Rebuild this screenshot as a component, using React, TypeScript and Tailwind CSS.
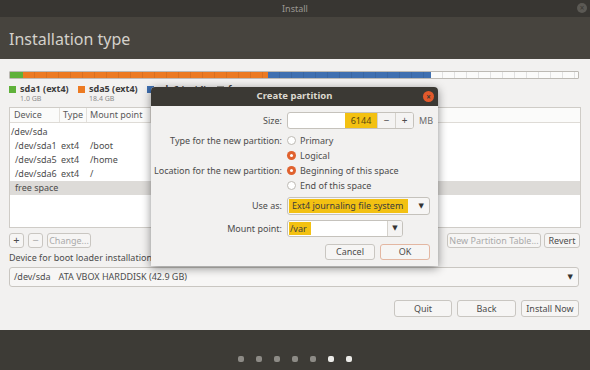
import React from "react";

const FONT = "font-['Noto_Sans','DejaVu_Sans',sans-serif]";

const legend = [
  { color: "bg-[#5fb13a]", name: "sda1 (ext4)", size: "1.0 GB", w: "w-[69px]" },
  { color: "bg-[#ec7a22]", name: "sda5 (ext4)", size: "18.4 GB", w: "w-[69px]" },
  { color: "bg-[#3f6fb0]", name: "sda6 (ext4)", size: "13.2 GB", w: "w-[70px]" },
];

const rows = [
  { dev: "/dev/sda", type: "", mount: "", indent: false },
  { dev: "/dev/sda1", type: "ext4", mount: "/boot", indent: true },
  { dev: "/dev/sda5", type: "ext4", mount: "/home", indent: true },
  { dev: "/dev/sda6", type: "ext4", mount: "/", indent: true },
];

function Radio({ on }: { on?: boolean }) {
  return on ? (
    <span className="flex h-[9px] w-[9px] items-center justify-center rounded-full bg-[#e0622f]">
      <span className="h-[3px] w-[3px] rounded-full bg-white" />
    </span>
  ) : (
    <span className="h-[9px] w-[9px] rounded-full border border-[#bdbab4] bg-white" />
  );
}

function Btn({ children, className = "" }: { children: React.ReactNode; className?: string }) {
  return (
    <div
      className={`flex items-center justify-center rounded-[3px] border border-[#c9c6c1] bg-[#f6f5f4] text-[9px] text-[#4c4c4c] ${className}`}
    >
      {children}
    </div>
  );
}

function CreatePartition() {
  return (
    <div className="absolute left-[151px] top-[87px] w-[287px] overflow-hidden rounded-t-[4px] bg-[#f2f1f0] shadow-[0_2px_10px_rgba(0,0,0,0.45)]">
      <div className="relative flex h-[19px] items-center justify-center bg-[#3b3934] text-[9.5px] font-bold text-[#dcd8cf]">
        Create partition
        <span className="absolute right-[4px] top-[4px] flex h-[11px] w-[11px] items-center justify-center rounded-full bg-[#e2592b] text-[8px] leading-none font-bold text-[#3b3934]">
          ×
        </span>
      </div>
      <div className="grid grid-cols-[131px_1fr] gap-x-[5px] px-0 pb-[6px] pt-[6px] text-[9px] text-[#4c4c4c]">
        <div className="flex h-[17px] items-center justify-end">Size:</div>
        <div className="flex items-center">
          <div className="flex h-[17px] w-[127px] overflow-hidden rounded-[3px] border border-[#c5c2bc] bg-white">
            <div className="flex flex-1 justify-end">
              <span className="flex h-full w-[32px] items-center justify-center bg-[#f3c112] text-[#5a4a10]">6144</span>
            </div>
            <div className="flex w-[18px] items-center justify-center border-l border-[#d5d2cc] bg-[#f4f3f2] text-[10px]">−</div>
            <div className="flex w-[18px] items-center justify-center border-l border-[#d5d2cc] bg-[#f4f3f2] text-[10px]">+</div>
          </div>
          <span className="ml-[5px] text-[#6a6a6a]">MB</span>
        </div>

        <div className="mt-[4px] flex h-[15px] items-center justify-end">Type for the new partition:</div>
        <div className="mt-[4px] flex h-[15px] items-center gap-[4px]">
          <Radio /> Primary
        </div>
        <div />
        <div className="flex h-[15px] items-center gap-[4px]">
          <Radio on /> Logical
        </div>
        <div className="flex h-[15px] items-center justify-end">Location for the new partition:</div>
        <div className="flex h-[15px] items-center gap-[4px]">
          <Radio on /> Beginning of this space
        </div>
        <div />
        <div className="flex h-[15px] items-center gap-[4px]">
          <Radio /> End of this space
        </div>

        <div className="mt-[4px] flex h-[18px] items-center justify-end">Use as:</div>
        <div className="mt-[4px] flex h-[18px] w-[143px] items-center rounded-[3px] border border-[#c5c2bc] bg-[#f7f6f5] pl-[1px] pr-[5px]">
          <span className="flex h-[14px] w-[119px] items-center bg-[#f3c112] pl-[3px] text-[#3c3c3c]">
            Ext4 journaling file system
          </span>
          <span className="ml-auto text-[7px] text-[#333]">▼</span>
        </div>

        <div className="mt-[5px] flex h-[17px] items-center justify-end">Mount point:</div>
        <div className="mt-[5px] flex h-[17px] w-[116px] overflow-hidden rounded-[3px] border border-[#c5c2bc] bg-white">
          <div className="flex flex-1 items-center pl-[1px]">
            <span className="flex h-[13px] items-center bg-[#f3c112] pl-[1px] pr-[4px] text-[#3c3c3c]">/var</span>
          </div>
          <div className="flex w-[15px] items-center justify-center border-l border-[#d5d2cc] bg-[#f4f3f2] text-[7px] text-[#333]">
            ▼
          </div>
        </div>

        <div className="col-span-2 mt-[7px] flex justify-end gap-[5px] pr-[8px]">
          <Btn className="h-[16px] w-[50px]">Cancel</Btn>
          <Btn className="h-[16px] w-[50px] border-[#e3b7a2]">OK</Btn>
        </div>
      </div>
    </div>
  );
}

export default function App() {
  const dots = [false, false, false, false, false, true, true];
  return (
    <div className={`relative h-[370px] w-[590px] overflow-hidden bg-[#3d3b36] ${FONT}`}>
      {/* title bar */}
      <div className="relative flex h-[17px] items-center justify-center bg-[#383632] text-[9px] text-[#9a9893]">
        Install
        <span className="absolute right-[3px] top-[3px] flex h-[10px] w-[10px] items-center justify-center rounded-full bg-[#5b5954] text-[8px] leading-none text-[#383632]">
          ×
        </span>
      </div>
      {/* header */}
      <div className="flex h-[42px] items-center bg-[#47443e] px-[9px] pt-[2px] text-[16px] text-[#d4d1cb]">
        Installation type
      </div>

      {/* body */}
      <div className="flex h-[271px] flex-col bg-[#f2f1f0] px-[9px] pt-[12px] text-[9px] text-[#4c4c4c]">
        <div className="flex h-[8px] w-[570px] overflow-hidden rounded-[1px] border border-[#bdbab4]">
          <div className="w-[13px] bg-[#5fb13a]" />
          <div className="w-[245px] bg-[#ec7a22] bg-[repeating-linear-gradient(90deg,transparent_0_11px,rgba(0,0,0,0.08)_11px_12px)]" />
          <div className="w-[163px] bg-[#4070b0] bg-[repeating-linear-gradient(90deg,transparent_0_11px,rgba(0,0,0,0.08)_11px_12px)]" />
          <div className="flex-1 bg-[#fbfbfa] bg-[repeating-linear-gradient(90deg,transparent_0_11px,rgba(0,0,0,0.1)_11px_12px)]" />
        </div>

        <div className="mt-[5px] flex h-[19px]">
          {legend.map((l) => (
            <div key={l.name} className={`flex ${l.w} gap-[4px]`}>
              <span className={`mt-[2px] h-[7px] w-[7px] ${l.color}`} />
              <div>
                <div className="text-[9px] leading-[10px] font-bold text-[#3c3c3c]">{l.name}</div>
                <div className="text-[7px] leading-[9px] text-[#8a8a8a]">{l.size}</div>
              </div>
            </div>
          ))}
          <div className="flex gap-[4px]">
            <span className="mt-[2px] h-[7px] w-[7px] border border-[#9a9893] bg-white" />
            <div>
              <div className="text-[9px] leading-[10px] font-bold text-[#3c3c3c]">free space</div>
              <div className="text-[7px] leading-[9px] text-[#8a8a8a]">10.3 GB</div>
            </div>
          </div>
        </div>

        {/* table */}
        <div className="mt-[4px] flex h-[121px] w-[572px] flex-col border border-[#cfccc7] bg-white">
          <div className="flex h-[15px] border-b border-[#dedbd6] bg-[#fbfbfa] text-[#5a5a5a]">
            <div className="flex w-[50px] items-center border-r border-[#e3e0db] pl-[4px]">Device</div>
            <div className="flex w-[27px] items-center border-r border-[#e3e0db] pl-[3px]">Type</div>
            <div className="flex w-[64px] items-center border-r border-[#e3e0db] pl-[3px]">Mount point</div>
            <div className="flex w-[45px] items-center border-r border-[#e3e0db] pl-[3px]">Format?</div>
            <div className="flex w-[50px] items-center border-r border-[#e3e0db] pl-[3px]">Size</div>
            <div className="flex w-[50px] items-center border-r border-[#e3e0db] pl-[3px]">Used</div>
            <div className="flex flex-1 items-center pl-[3px]">System</div>
          </div>
          <div className="pt-[2px]">
            {rows.map((r) => (
              <div key={r.dev} className="flex h-[14px] items-center">
                <div className={`w-[50px] ${r.indent ? "pl-[5px]" : "pl-[1px]"}`}>{r.dev}</div>
                <div className="w-[27px] pl-[1px]">{r.type}</div>
                <div className="pl-[3px]">{r.mount}</div>
              </div>
            ))}
            <div className="flex h-[14px] items-center bg-[#dddbd8] pl-[5px]">free space</div>
          </div>
        </div>

        <div className="mt-[5px] flex h-[15px] w-[571px]">
          <Btn className="w-[15px] text-[11px]">+</Btn>
          <Btn className="ml-[4px] w-[15px] text-[11px] text-[#aaa]">−</Btn>
          <Btn className="ml-[4px] w-[44px] text-[#aaa]">Change...</Btn>
          <Btn className="ml-auto w-[94px] text-[#aaa]">New Partition Table...</Btn>
          <Btn className="ml-[3px] w-[36px]">Revert</Btn>
        </div>

        <div className="mt-[4px] leading-[12px]">Device for boot loader installation:</div>
        <div className="mt-[3px] flex h-[20px] w-[570px] items-center rounded-[3px] border border-[#c9c6c1] bg-[#f7f6f5] pl-[4px] pr-[5px]">
          <span>/dev/sda</span>
          <span className="ml-[8px]">ATA VBOX HARDDISK (42.9 GB)</span>
          <span className="ml-auto text-[7px] text-[#333]">▼</span>
        </div>

        <div className="mt-[13px] flex w-[570px] justify-end gap-[5px]">
          <Btn className="h-[17px] w-[58px]">Quit</Btn>
          <Btn className="h-[17px] w-[59px]">Back</Btn>
          <Btn className="h-[17px] w-[58px]">Install Now</Btn>
        </div>
      </div>

      {/* footer dots */}
      <div className="flex h-[40px] items-start justify-center gap-[12px] pt-[26px]">
        {dots.map((w, i) => (
          <span key={i} className={`h-[6px] w-[6px] rounded-[2px] ${w ? "bg-[#ecebe8]" : "bg-[#8d8b86]"}`} />
        ))}
      </div>

      <CreatePartition />
    </div>
  );
}
